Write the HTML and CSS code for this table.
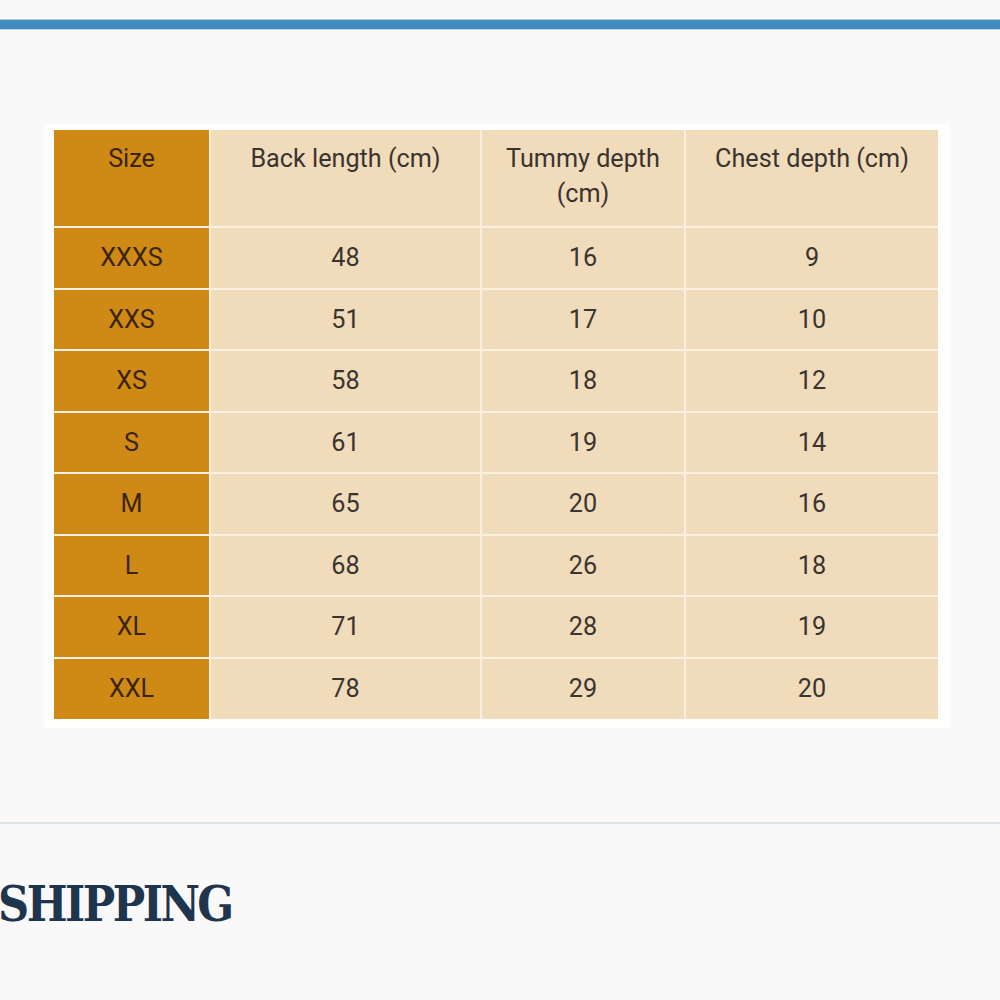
FILE: index.html
```html
<!DOCTYPE html>
<html lang="en">
<head>
<meta charset="utf-8">
<title>Size chart</title>
<link rel="stylesheet" href="styles.css">
</head>
<body>
<div class="topbar"></div>
<main class="content">
  <figure class="chart">
    <table class="sizes">
      <colgroup>
        <col class="c1"><col class="c2"><col class="c3"><col class="c4">
      </colgroup>
      <thead>
        <tr class="head">
          <th class="size">Size</th>
          <th>Back length (cm)</th>
          <th>Tummy depth<br>(cm)</th>
          <th>Chest depth (cm)</th>
        </tr>
      </thead>
      <tbody>
        <tr><td class="size">XXXS</td><td>48</td><td>16</td><td>9</td></tr>
        <tr><td class="size">XXS</td><td>51</td><td>17</td><td>10</td></tr>
        <tr><td class="size">XS</td><td>58</td><td>18</td><td>12</td></tr>
        <tr><td class="size">S</td><td>61</td><td>19</td><td>14</td></tr>
        <tr><td class="size">M</td><td>65</td><td>20</td><td>16</td></tr>
        <tr><td class="size">L</td><td>68</td><td>26</td><td>18</td></tr>
        <tr><td class="size">XL</td><td>71</td><td>28</td><td>19</td></tr>
        <tr><td class="size">XXL</td><td>78</td><td>29</td><td>20</td></tr>
      </tbody>
    </table>
  </figure>
  <hr class="divider">
  <h2 class="section-title">SHIPPING</h2>
</main>
</body>
</html>
```

FILE: styles.css
```css
html, body {
  margin: 0;
  padding: 0;
}
body {
  background: #f9f9f9;
  font-family: Roboto, "Liberation Sans", sans-serif;
  overflow: hidden;
}
.topbar {
  margin-top: 20px;
  height: 9px;
  background: #428bc0;
  box-shadow: 0 -1px 0 #a9cce4, 0 1px 0 #bcd8ea;
}
.content {
  display: flex;
  flex-direction: column;
}
.chart {
  margin: 95px 0 0 44px;
  width: 906px;
  box-sizing: border-box;
  padding: 6px 12px 9px 10px;
  background: #fefefd;
}
.sizes {
  width: 884px;
  border-collapse: collapse;
  border-style: hidden;
  table-layout: fixed;
  font-size: 25.2px;
  line-height: 35px;
  color: #3a3430;
}
.c1 { width: 156px; }
.c2 { width: 271px; }
.c3 { width: 204px; }
.c4 { width: 253px; }
.sizes th, .sizes td {
  border: 2px solid #fbf0df;
  background: #f0dbbb;
  text-align: center;
  font-weight: 400;
  padding: 0;
}
.sizes th {
  vertical-align: top;
  padding-top: 11px;
}
.sizes .head { height: 97px; }
.sizes tbody tr { height: 61.5px; }
.sizes td { vertical-align: middle; }
.sizes .size {
  background: #cf8a16;
  color: #3b240a;
}
.divider {
  margin: 94px 0 0 0;
  border: 0;
  height: 2px;
  background: #dde3e7;
}
.section-title {
  margin: 52px 0 0 -2px;
  font-family: "DejaVu Serif", serif;
  font-stretch: condensed;
  font-weight: 700;
  font-size: 48px;
  line-height: 56px;
  letter-spacing: -2.5px;
  color: #1f344d;
}
```
